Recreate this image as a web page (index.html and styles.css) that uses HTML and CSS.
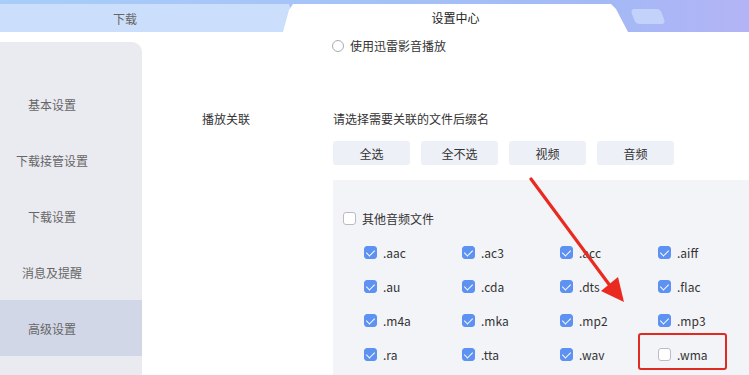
FILE: index.html
```html
<!DOCTYPE html>
<html lang="zh">
<head>
<meta charset="utf-8">
<link rel="stylesheet" href="styles.css">
</head>
<body>
<header class="topbar">
  <div class="tab tab-inactive">下载</div>
  <div class="tab tab-active">设置中心</div>
  <div class="tab-add"></div>
</header>
<div class="layout">
  <nav class="sidebar">
    <div class="nav-item">基本设置</div>
    <div class="nav-item">下载接管设置</div>
    <div class="nav-item">下载设置</div>
    <div class="nav-item">消息及提醒</div>
    <div class="nav-item active">高级设置</div>
  </nav>
  <main class="content">
    <div class="radio-row">
      <span class="radio"></span><span>使用迅雷影音播放</span>
    </div>
    <div class="assoc">
      <div class="assoc-label">播放关联</div>
      <div class="assoc-body">
        <div class="hint">请选择需要关联的文件后缀名</div>
        <div class="btns">
          <button class="btn">全选</button>
          <button class="btn">全不选</button>
          <button class="btn">视频</button>
          <button class="btn">音频</button>
        </div>
        <div class="panel">
          <div class="group-row"><span class="cb"></span><span>其他音频文件</span></div>
          <div class="grid">
            <div class="item"><span class="cb on"></span>.aac</div>
            <div class="item"><span class="cb on"></span>.ac3</div>
            <div class="item"><span class="cb on"></span>.acc</div>
            <div class="item"><span class="cb on"></span>.aiff</div>
            <div class="item"><span class="cb on"></span>.au</div>
            <div class="item"><span class="cb on"></span>.cda</div>
            <div class="item"><span class="cb on"></span>.dts</div>
            <div class="item"><span class="cb on"></span>.flac</div>
            <div class="item"><span class="cb on"></span>.m4a</div>
            <div class="item"><span class="cb on"></span>.mka</div>
            <div class="item"><span class="cb on"></span>.mp2</div>
            <div class="item"><span class="cb on"></span>.mp3</div>
            <div class="item"><span class="cb on"></span>.ra</div>
            <div class="item"><span class="cb on"></span>.tta</div>
            <div class="item"><span class="cb on"></span>.wav</div>
            <div class="item"><span class="cb"></span>.wma</div>
          </div>
        </div>
      </div>
    </div>
  </main>
</div>
<div class="redbox"></div>
<svg class="arrow" width="749" height="375" viewBox="0 0 749 375">
  <line x1="531" y1="179" x2="611" y2="287" stroke="#ea2a1f" stroke-width="3.2" stroke-linecap="round"/>
  <polygon points="624,302 601,291 618,277" fill="#ea2a1f"/>
</svg>
</body>
</html>
```
FILE: styles.css
```css
* { box-sizing: border-box; }
html, body { margin: 0; padding: 0; }
body {
  width: 749px;
  height: 375px;
  overflow: hidden;
  background: #fff;
  font-family: "Noto Sans CJK SC", "Noto Sans", sans-serif;
  font-size: 12px;
  color: #333;
  position: relative;
}
.topbar {
  height: 32px;
  display: flex;
  align-items: flex-end;
  background: linear-gradient(90deg, #a9cdf8 0%, #a4c2f7 50%, #a3b9f6 80%, #b3b3f5 100%);
}
.tab {
  height: 28px;
  display: flex;
  align-items: center;
  justify-content: center;
}
.tab-inactive {
  width: 298px;
  background: #cbdefb;
  color: #666;
  clip-path: polygon(0 0, 289px 0, 298px 28px, 0 28px);
  padding-right: 48px;
}
.tab-active {
  width: 345px;
  margin-left: -15px;
  background: #fff;
  color: #222;
  clip-path: polygon(0 28px, 6px 6px, 10px 0, 328px 0, 333px 5px, 345px 28px);
  padding-bottom: 1px;
}
.tab-add {
  width: 30px;
  height: 15px;
  margin: 0 0 8px 5px;
  background: #c3d2fb;
  border-radius: 4px;
  transform: skewX(20deg);
}
.layout {
  display: flex;
  height: 343px;
}
.sidebar {
  width: 142px;
  margin-top: 10px;
  padding-top: 34px;
  background: #eaebf1;
  border-top-right-radius: 10px;
  flex-shrink: 0;
}
.nav-item {
  height: 56px;
  display: flex;
  align-items: center;
  justify-content: center;
  padding-right: 38px;
  color: #666;
  font-size: 12px;
}
.nav-item.active { background: #d2d7e7; }
.content {
  flex: 1;
  padding-left: 60px;
  display: flex;
  flex-direction: column;
}
.radio-row {
  margin-left: 130px;
  margin-top: 5px;
  height: 20px;
  display: flex;
  align-items: center;
  gap: 6px;
  color: #333;
}
.radio {
  width: 12px;
  height: 12px;
  border: 1px solid #a8abb2;
  border-radius: 50%;
  background: #fff;
}
.assoc {
  display: flex;
  margin-top: 55px;
}
.assoc-label {
  width: 131px;
  height: 20px;
  line-height: 20px;
  color: #333;
}
.assoc-body {
  flex: 1;
  display: flex;
  flex-direction: column;
}
.hint { height: 20px; line-height: 20px; color: #333; }
.btns {
  display: flex;
  gap: 11px;
  margin-top: 12px;
}
.btn {
  width: 77px;
  height: 24px;
  border: 0;
  border-radius: 3px;
  background: #edf0f6;
  font-family: inherit;
  font-size: 12px;
  color: #333;
  padding: 0;
}
.panel {
  margin-top: 15px;
  height: 200px;
  background: #f3f4f8;
  padding: 28px 0 0 10px;
}
.group-row {
  height: 20px;
  display: flex;
  align-items: center;
  gap: 6px;
  color: #333;
}
.grid {
  margin-top: 7px;
  padding-left: 21px;
  display: grid;
  grid-template-columns: repeat(4, 98px);
  grid-auto-rows: 34px;
}
.item {
  display: flex;
  align-items: center;
  gap: 6px;
  color: #333;
}
.cb {
  width: 13px;
  height: 13px;
  border: 1px solid #b9bcc3;
  border-radius: 3px;
  background: #fff;
  flex-shrink: 0;
  position: relative;
}
.cb.on {
  background: #5d92f2;
  border-color: #5d92f2;
}
.cb.on::after {
  content: "";
  position: absolute;
  left: 3px;
  top: 1px;
  width: 4px;
  height: 7px;
  border: solid #fff;
  border-width: 0 1.5px 1.5px 0;
  transform: rotate(45deg);
}
.redbox {
  position: absolute;
  left: 638px;
  top: 333px;
  width: 89px;
  height: 37px;
  border: 2px solid #e02a22;
  border-radius: 3px;
}
.arrow {
  position: absolute;
  left: 0;
  top: 0;
  pointer-events: none;
}
```
